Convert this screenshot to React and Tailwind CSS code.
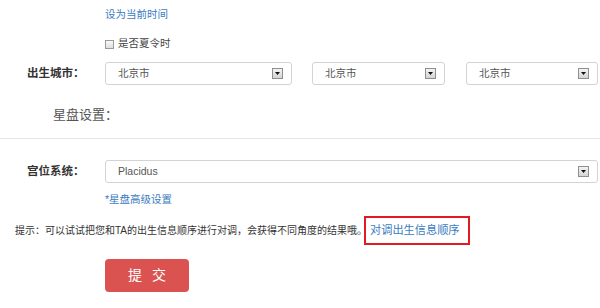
import React from "react";

const font = { fontFamily: '"Liberation Sans", "Noto Sans CJK SC", sans-serif' };

const Arrow = () => (
  <span className="flex h-[11px] w-[11px] items-center justify-center border border-[#8f8f8f] bg-gradient-to-b from-[#f4f4f4] to-[#d4d4d4]">
    <svg width="5" height="3" viewBox="0 0 5 3">
      <path d="M0 0h5L2.5 3z" fill="#111" />
    </svg>
  </span>
);

const Select = ({ value, className }) => (
  <div
    className={`flex h-[23px] items-center justify-between rounded-[3px] border border-[#d3d3d3] bg-white pl-[12px] pr-[8px] text-[10.5px] text-[#555] ${className}`}
  >
    <span>{value}</span>
    <Arrow />
  </div>
);

export default function App() {
  return (
    <div className="relative h-[308px] w-[600px] overflow-hidden bg-white text-[#333]" style={font}>
      <div className="flex h-[30px] items-center pl-[105px]">
        <a className="text-[10.5px] text-[#3a7cc1]">设为当前时间</a>
      </div>

      <div className="flex h-[28px] items-center pl-[105px]">
        <span className="mr-[4px] h-[9px] w-[9px] border border-[#9a9a9a] bg-gradient-to-b from-[#fafafa] to-[#dedede]" />
        <span className="text-[10.5px] text-[#444]">是否夏令时</span>
      </div>

      <div className="mt-[4px] flex h-[23px] items-center">
        <label className="w-[105px] pl-[27px] text-[11.5px] font-bold text-[#333]">出生城市：</label>
        <Select value="北京市" className="w-[187px]" />
        <Select value="北京市" className="ml-[20px] w-[133px]" />
        <Select value="北京市" className="ml-[21px] w-[132px]" />
      </div>

      <div className="mt-[20px] flex h-[20px] items-center pl-[53px] text-[13px] text-[#555]">星盘设置：</div>

      <div className="mt-[13px] border-t border-[#e5e5e5]" />

      <div className="mt-[21px] flex h-[23px] items-center">
        <label className="w-[105px] pl-[27px] text-[11.5px] font-bold text-[#333]">宫位系统：</label>
        <Select value="Placidus" className="w-[493px]" />
      </div>

      <div className="flex h-[33px] items-center pl-[105px]">
        <a className="text-[10.5px] text-[#3a7cc1]">*星盘高级设置</a>
      </div>

      <div className="flex h-[29px] items-center pl-[15px]">
        <span className="w-[349px] whitespace-nowrap text-[10px] text-[#333]">
          提示：可以试试把您和TA的出生信息顺序进行对调，会获得不同角度的结果哦。
        </span>
        <div className="flex h-[29px] w-[106px] items-center border-2 border-[#e01b22] pl-[4px]">
          <a className="whitespace-nowrap text-[11.2px] text-[#3a7cc1]">对调出生信息顺序</a>
        </div>
      </div>

      <div className="mt-[14px] pl-[105px]">
        <button className="flex h-[33px] w-[84px] items-center justify-center rounded-[4px] bg-[#db5350] text-[14px] tracking-[3px] text-white">
          <span className="pl-[3px]">提&nbsp;交</span>
        </button>
      </div>
    </div>
  );
}
